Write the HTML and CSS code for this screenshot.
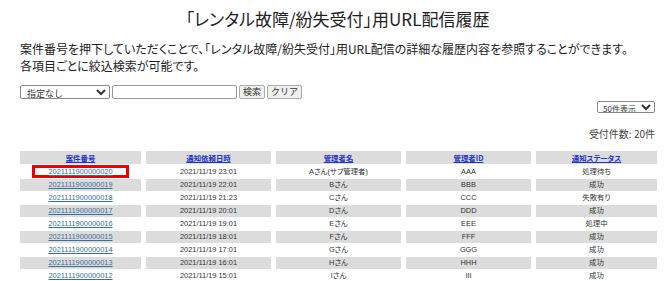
FILE: index.html
```html
<!DOCTYPE html>
<html lang="ja">
<head>
  <meta charset="UTF-8">
  <title>「レンタル故障/紛失受付」用URL配信履歴</title>
  <link rel="stylesheet" href="styles.css">
</head>
<body>
  <div class="page">
    <h1>「レンタル故障/紛失受付」用URL配信履歴</h1>
    <p class="lead">案件番号を押下していただくことで、「レンタル故障/紛失受付」用URL配信の詳細な履歴内容を参照することができます。<br>各項目ごとに絞込検索が可能です。</p>

    <form class="search">
      <select class="field-select">
        <option>指定なし</option>
      </select>
      <input type="text" class="keyword">
      <button type="button">検索</button>
      <button type="button">クリア</button>
    </form>

    <div class="per-page">
      <select class="count-select">
        <option>50件表示</option>
      </select>
    </div>

    <div class="total">受付件数: 20件</div>

    <table class="history">
      <colgroup>
        <col class="c-narrow"><col class="c-wide"><col class="c-wide"><col class="c-wide"><col class="c-narrow">
      </colgroup>
      <thead>
        <tr>
          <th><a href="#">案件番号</a></th>
          <th><a href="#">通知依頼日時</a></th>
          <th><a href="#">管理者名</a></th>
          <th><a href="#">管理者ID</a></th>
          <th><a href="#">通知ステータス</a></th>
        </tr>
      </thead>
      <tbody>
        <tr>
          <td><span class="marked"><a href="#">2021111900000020</a></span></td>
          <td>2021/11/19 23:01</td><td>Aさん(サブ管理者)</td><td>AAA</td><td>処理待ち</td>
        </tr>
        <tr class="alt">
          <td><a href="#">2021111900000019</a></td>
          <td>2021/11/19 22:01</td><td>Bさん</td><td>BBB</td><td>成功</td>
        </tr>
        <tr>
          <td><a href="#">2021111900000018</a></td>
          <td>2021/11/19 21:23</td><td>Cさん</td><td>CCC</td><td>失敗有り</td>
        </tr>
        <tr class="alt">
          <td><a href="#">2021111900000017</a></td>
          <td>2021/11/19 20:01</td><td>Dさん</td><td>DDD</td><td>成功</td>
        </tr>
        <tr>
          <td><a href="#">2021111900000016</a></td>
          <td>2021/11/19 19:01</td><td>Eさん</td><td>EEE</td><td>処理中</td>
        </tr>
        <tr class="alt">
          <td><a href="#">2021111900000015</a></td>
          <td>2021/11/19 18:01</td><td>Fさん</td><td>FFF</td><td>成功</td>
        </tr>
        <tr>
          <td><a href="#">2021111900000014</a></td>
          <td>2021/11/19 17:01</td><td>Gさん</td><td>GGG</td><td>成功</td>
        </tr>
        <tr class="alt">
          <td><a href="#">2021111900000013</a></td>
          <td>2021/11/19 16:01</td><td>Hさん</td><td>HHH</td><td>成功</td>
        </tr>
        <tr>
          <td><a href="#">2021111900000012</a></td>
          <td>2021/11/19 15:01</td><td>Iさん</td><td>III</td><td>成功</td>
        </tr>
      </tbody>
    </table>
  </div>
</body>
</html>
```

FILE: styles.css
```css
* {
  margin: 0;
  padding: 0;
  box-sizing: border-box;
}

body {
  font-family: "Noto Sans CJK JP", "Liberation Sans", sans-serif;
  font-feature-settings: "palt";
  color: #222;
  background: #fff;
}

.page {
  padding: 0 17px 0 20px;
}

h1 {
  font-size: 17px;
  font-weight: 400;
  text-align: center;
  line-height: 24px;
  padding-top: 7px;
}

.lead {
  font-size: 12px;
  line-height: 17px;
  margin-top: 9px;
}

.search {
  display: flex;
  align-items: center;
  gap: 2px;
  margin-top: 11px;
  height: 14px;
}

select,
input,
button {
  font-family: "Noto Sans CJK JP", "Liberation Sans", sans-serif;
  font-size: 9px;
  height: 14px;
  color: #333;
}

select {
  border: 1px solid #888;
  border-radius: 2px;
  background: #fff;
  padding: 0 2px;
}

.field-select {
  width: 90px;
}

.keyword {
  width: 125px;
  border: 1px solid #999;
  border-radius: 2px;
}

button {
  background: #f0f0f0;
  border: 1px solid #aaa;
  border-radius: 2px;
  padding: 0 3px;
  line-height: 12px;
}

.per-page {
  display: flex;
  justify-content: flex-end;
  margin-top: 2px;
}

.count-select {
  width: 58px;
  height: 12px;
  font-size: 8px;
  padding: 0 1px;
}

.total {
  text-align: right;
  font-size: 10px;
  line-height: 14px;
  color: #444;
  margin-top: 14px;
}

.history {
  width: calc(100% + 10px);
  margin: 9px -5px 0;
  border-spacing: 5px 1px;
  table-layout: fixed;
  font-family: "Liberation Sans", "Noto Sans CJK JP", sans-serif;
  font-size: 7.4px;
  color: #333;
}

.c-narrow {
  width: 121px;
}

.c-wide {
  width: 125px;
}

th {
  background: #dcdcdc;
  height: 13px;
  padding: 0;
  font-weight: 700;
  font-family: "Noto Sans CJK JP", sans-serif;
}

th a {
  color: #2233cc;
}

td {
  height: 12px;
  padding: 0;
  text-align: center;
  line-height: 10px;
  white-space: nowrap;
}

td a {
  color: #3a6f9c;
}

.alt td {
  background: #dcdcdc;
}

.marked {
  display: inline-block;
  vertical-align: middle;
  border: 3px solid #ee0000;
  background: #fff;
  padding: 0 13px;
  line-height: 7px;
}
```
